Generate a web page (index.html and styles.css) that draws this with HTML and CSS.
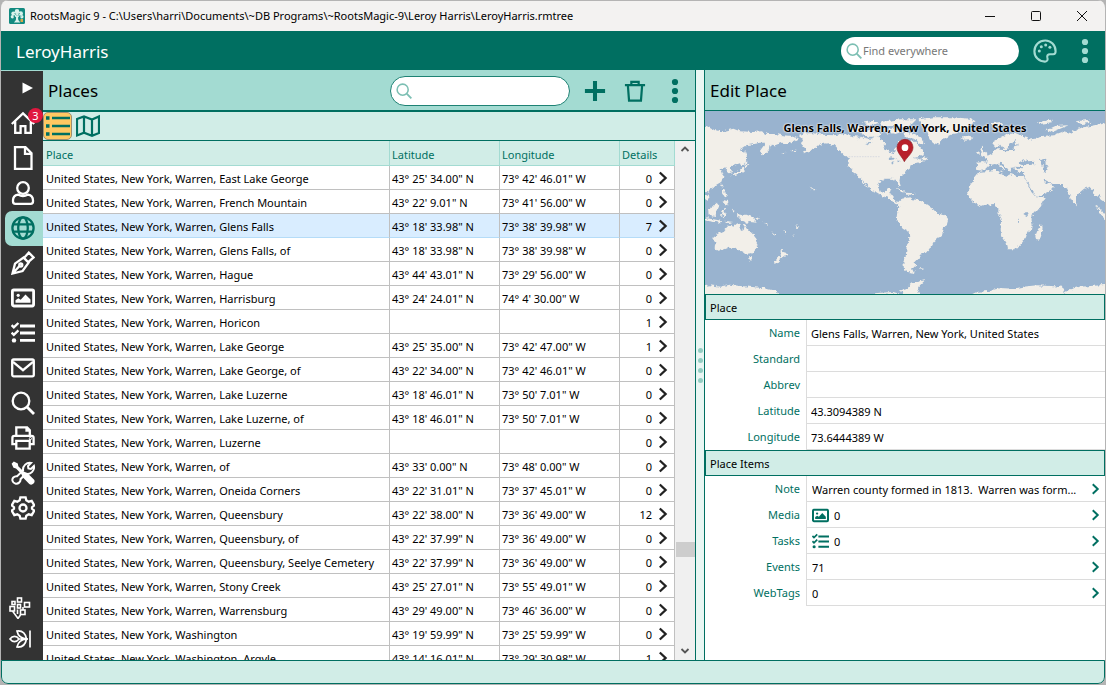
FILE: index.html
```html
<!DOCTYPE html>
<html lang="en">
<head>
<meta charset="utf-8">
<title>RootsMagic 9 - LeroyHarris</title>
<link rel="stylesheet" href="styles.css">
</head>
<body>
<svg class="sprite" aria-hidden="true">
  <symbol id="chev" viewBox="0 0 10 14"><path d="M1.8 1.5 7.6 7l-5.8 5.5" fill="none" stroke="currentColor" stroke-width="2.3"/></symbol>
  <symbol id="dots" viewBox="0 0 8 26"><circle cx="4" cy="4" r="3.1"/><circle cx="4" cy="13" r="3.1"/><circle cx="4" cy="22" r="3.1"/></symbol>
  <symbol id="lens" viewBox="0 0 24 24"><circle cx="10" cy="10" r="8.300" fill="none" stroke="currentColor" stroke-width="2.3"/><path d="m16 16 7 7" fill="none" stroke="currentColor" stroke-width="2.8"/></symbol>
  <symbol id="photo" viewBox="0 0 24 24"><rect x="1.4" y="4" width="21.2" height="16" rx="1.4" fill="none" stroke="currentColor" stroke-width="2.8"/><circle cx="7.200" cy="9.3" r="1.6" fill="currentColor"/><path d="M4.5 16.8v-2.6l2.8-2 2.4 1.6 4.8-5.4 5 5.2v3.2z" fill="currentColor"/></symbol>
  <symbol id="checks" viewBox="0 0 24 24"><path d="M9 5h15M9 12h15M9 19.4h15" fill="none" stroke="currentColor" stroke-width="2.8"/><path d="m.6 4.2 2.2 2.2L7.4 2M.6 11.6l2.2 2.2 4.6-4.4" fill="none" stroke="currentColor" stroke-width="2.4"/><circle cx="3" cy="19.4" r="2.2" fill="currentColor"/></symbol>
</svg>

<div class="window">
  <header class="titlebar">
    <svg class="app-icon" viewBox="0 0 16 16" aria-hidden="true"><rect width="16" height="16" rx="1.5" fill="#138a80"/><g fill="#d9f2ec"><circle cx="8" cy="3.4" r="2.3"/><circle cx="4.4" cy="5.5" r="2.1"/><circle cx="11.8" cy="5.4" r="2.2"/><circle cx="3.4" cy="8.8" r="1.7"/><circle cx="12.8" cy="8.8" r="1.7"/><circle cx="8" cy="7.2" r="2.2"/><path d="M7.2 7h1.8l.3 5 2 2.4H5l1.9-2.4z"/></g><path d="m5.5 5 2 2.5M10.8 5 8.8 8M4 8.6l3 1.6M12.4 8.4l-3 2" stroke="#138a80" stroke-width=".6"/><path d="M11.5 11h2.5v3h-2.500z" fill="#d9a94a"/></svg>
    <span class="caption">RootsMagic 9 - C:\Users\harri\Documents\~DB Programs\~RootsMagic-9\Leroy Harris\LeroyHarris.rmtree</span>
    <div class="win-buttons">
      <button type="button" aria-label="Minimize"><svg viewBox="0 0 12 12"><path d="M1 6.500h10"/></svg></button>
      <button type="button" aria-label="Maximize"><svg viewBox="0 0 12 12"><rect x="1.500" y="1.500" width="9" height="9" rx="1"/></svg></button>
      <button type="button" aria-label="Close"><svg viewBox="0 0 12 12"><path d="m1 1 10 10M11 1 1 11"/></svg></button>
    </div>
  </header>

  <div class="brandbar">
    <h1>LeroyHarris</h1>
    <div class="search search-top">
      <svg aria-hidden="true"><use href="#lens"/></svg>
      <input type="text" placeholder="Find everywhere" aria-label="Find everywhere">
    </div>
    <button type="button" class="palette" aria-label="Colors"><svg viewBox="0 0 24 24"><path d="M12.500 1.500C6.400 1.300 1.400 6.100 1.400 12.200c0 5.800 4.500 10.500 10.600 10.400 2.400-.1 3-1.900 2.400-3.800-.6-2.100.4-3.600 2.600-3.600h3.200c1.500 0 2.400-1.200 2.400-2.900C22.600 5.900 17.900 1.700 12.500 1.500z" fill="none" stroke="currentColor" stroke-width="2.100"/><g fill="currentColor"><circle cx="6.300" cy="12" r="1.500"/><circle cx="8.300" cy="7.700" r="1.500"/><circle cx="12.700" cy="6" r="1.500"/><circle cx="16.900" cy="8.200" r="1.500"/></g></svg></button>
    <button type="button" class="more" aria-label="More"><svg><use href="#dots"/></svg></button>
  </div>

  <div class="workspace">
    <nav class="rail" aria-label="Views">
      <button type="button" class="expand" aria-label="Expand"><svg viewBox="0 0 24 24"><path d="m7.500 6.500 10.500 5.500-10.500 5.500z" fill="currentColor"/></svg></button>
      <button type="button" aria-label="Home"><svg viewBox="0 0 24 24"><path d="M.8 13 12 2.300 23.200 13M4.200 10.500v11.300h5.400v-6.600h4.800v6.600h5.400V10.500"/></svg><span class="badge">3</span></button>
      <button type="button" aria-label="Publish"><svg viewBox="0 0 24 24"><path d="M4 1.200h10.500l6 6V22.800H4zM14 1.500v6.300h6.300"/></svg></button>
      <button type="button" aria-label="People"><svg viewBox="0 0 24 24"><circle cx="12" cy="7" r="5.800"/><path d="M7 13.600c-3 .6-5 2.900-5 5.700v1.300c0 1.200.9 2.200 2.200 2.200h15.600c1.300 0 2.200-1 2.200-2.200v-1.300c0-2.800-2-5.100-5-5.700-3 1.700-7 1.700-10 0z"/></svg></button>
      <button type="button" class="active" aria-label="Places" aria-current="page"><svg viewBox="0 0 24 24"><circle cx="12" cy="12" r="10.600"/><ellipse cx="12" cy="12" rx="4.800" ry="10.600"/><path d="M2.300 8.300h19.400M2.300 15.700h19.400"/></svg></button>
      <button type="button" aria-label="Sources"><svg viewBox="0 0 24 24"><path d="M1.500 22.500 4 12.600 12.600 6.600l5 5-6 8.400zM13 7 17.800 1.600 22.600 6.400 17.200 11.200M2 22l6.500-7"/><circle cx="9.800" cy="14" r="1.500"/></svg></button>
      <button type="button" aria-label="Media"><svg><use href="#photo"/></svg></button>
      <button type="button" aria-label="Tasks"><svg><use href="#checks"/></svg></button>
      <button type="button" aria-label="Addresses"><svg viewBox="0 0 24 24"><rect x="1.200" y="3.500" width="21.600" height="16.800" rx="1.500"/><path d="m2 5.800 10 8.400 10-8.400"/></svg></button>
      <button type="button" aria-label="Search"><svg><use href="#lens"/></svg></button>
      <button type="button" aria-label="Print"><svg viewBox="0 0 24 24"><path d="M5.300 10V1.400h10.800l2.700 2.800V10M5 18.200H1.400v-6.400c0-1.200.9-2 2-2h17.200c1.100 0 2 .8 2 2v6.400H19M5.300 14.800h13.400v7.800H5.300zM15.500 1.500v3.200h3"/><circle cx="19.300" cy="12.600" r=".4"/></svg></button>
      <button type="button" aria-label="Tools"><svg viewBox="0 0 24 24"><path d="M14.200 13.200 9.500 18.200c.4 2.700-2.300 5-5.200 4.300-2.900-.8-3.800-4-2-6 1-1 2.300-1.400 3.800-1.200l6-5.800c-.7-4.500 3.600-8.600 8-7.600L17 5l.4 2.500 2.500.5 3-3c.9 4.300-3 8.700-7.300 7.800" stroke-width="2"/><path d="m.6 2.800 2.200-2.200 4 2 .5 2.600 5.400 5.300 3.600 1.500 6.600 6.600c2.400 2.600-1.800 6.800-4.600 4.400l-6.600-6.700-1.500-3.500L5 7.400l-2.500-.6z" fill="currentColor" stroke="none"/></svg></button>
      <button type="button" aria-label="Settings"><svg viewBox="0 0 24 24"><path d="M9.400 1.300h5.200l.7 3 2.400 1.400 3-.9 2.600 4.500-2.300 1.900v1.600l2.300 1.900-2.600 4.500-3-.9-2.400 1.400-.7 3H9.400l-.7-3-2.400-1.400-3 .9-2.600-4.500L3 12.800v-1.600L.7 9.300l2.600-4.500 3 .9 2.400-1.400z"/><circle cx="12" cy="12" r="3.500"/></svg></button>
      <span class="rail-gap"></span>
      <button type="button" class="small" aria-label="FamilySearch"><svg viewBox="0 0 22 22"><g stroke-width="1.600"><rect x="8.500" y="1" width="4" height="4"/><rect x="3" y="4.500" width="3" height="3"/><rect x="1" y="9.500" width="4.500" height="4.500"/><rect x="8.500" y="7.500" width="3" height="3.500"/><rect x="15.500" y="5.500" width="5" height="4.500"/><rect x="11.500" y="13" width="4.500" height="4.500"/><path d="M3.500 14 9 21.500 11.500 18M8.500 17v-4.500M14 13v-3"/></g></svg></button>
      <button type="button" class="small" aria-label="Ancestry"><svg viewBox="0 0 22 22"><g stroke-width="1.700"><path d="M1 11c2.500-3.400 6.500-3.400 9 0-2.500 3.400-6.500 3.400-9 0zM19 11h-9M8 3c5-.5 8.500 2.500 9.500 8-5.500-.5-8.500-3-9.500-8zM8 19c5 .5 8.500-2.500 9.500-8-5.500.5-8.500 3-9.500 8zM21 2.500v17"/></g></svg></button>
    </nav>

    <main class="places">
      <div class="toolbar">
        <h2>Places</h2>
        <div class="search search-places"><svg aria-hidden="true"><use href="#lens"/></svg><input type="text" aria-label="Search places"></div>
        <button type="button" aria-label="Add"><svg viewBox="0 0 24 24"><path d="M12 1v22M1 12h22" stroke-width="4.400"/></svg></button>
        <button type="button" aria-label="Delete"><svg viewBox="0 0 24 24"><path d="M1 5.500h22M8 5.500V2h8v3.500M4.200 5.500l1.300 17h13l1.300-17" stroke-width="2.400"/></svg></button>
        <button type="button" class="more" aria-label="More"><svg><use href="#dots"/></svg></button>
      </div>
      <div class="viewbar">
        <button type="button" class="on" aria-label="List view"><svg viewBox="0 0 24 24"><path d="M6 4h18M6 12h18M6 20h18" stroke-width="2.600"/><path d="M0 4h3.500M0 12h3.500M0 20h3.500" stroke-width="3.600"/></svg></button>
        <button type="button" aria-label="Map view"><svg viewBox="0 0 24 24"><path d="m1 5 7-2.500 8 3 7-3V19l-7 2.800-8-3L1 21.500zM8 3v15.500M16 5.500V21.500" stroke-width="2.200"/></svg></button>
      </div>
      <div class="list">
        <div class="table-wrap">
          <table>
            <colgroup><col><col class="c-lat"><col class="c-lon"><col class="c-det"></colgroup>
            <thead><tr><th>Place</th><th>Latitude</th><th>Longitude</th><th>Details</th></tr></thead>
            <tbody>
              <tr><td>United States, New York, Warren, East Lake George</td><td>43° 25' 34.00" N</td><td>73° 42' 46.01" W</td><td>0<svg><use href="#chev"/></svg></td></tr>
              <tr><td>United States, New York, Warren, French Mountain</td><td>43° 22' 9.01" N</td><td>73° 41' 56.00" W</td><td>0<svg><use href="#chev"/></svg></td></tr>
              <tr class="selected"><td>United States, New York, Warren, Glens Falls</td><td>43° 18' 33.98" N</td><td>73° 38' 39.98" W</td><td>7<svg><use href="#chev"/></svg></td></tr>
              <tr><td>United States, New York, Warren, Glens Falls, of</td><td>43° 18' 33.98" N</td><td>73° 38' 39.98" W</td><td>0<svg><use href="#chev"/></svg></td></tr>
              <tr><td>United States, New York, Warren, Hague</td><td>43° 44' 43.01" N</td><td>73° 29' 56.00" W</td><td>0<svg><use href="#chev"/></svg></td></tr>
              <tr><td>United States, New York, Warren, Harrisburg</td><td>43° 24' 24.01" N</td><td>74° 4' 30.00" W</td><td>0<svg><use href="#chev"/></svg></td></tr>
              <tr><td>United States, New York, Warren, Horicon</td><td></td><td></td><td>1<svg><use href="#chev"/></svg></td></tr>
              <tr><td>United States, New York, Warren, Lake George</td><td>43° 25' 35.00" N</td><td>73° 42' 47.00" W</td><td>1<svg><use href="#chev"/></svg></td></tr>
              <tr><td>United States, New York, Warren, Lake George, of</td><td>43° 22' 34.00" N</td><td>73° 42' 46.01" W</td><td>0<svg><use href="#chev"/></svg></td></tr>
              <tr><td>United States, New York, Warren, Lake Luzerne</td><td>43° 18' 46.01" N</td><td>73° 50' 7.01" W</td><td>0<svg><use href="#chev"/></svg></td></tr>
              <tr><td>United States, New York, Warren, Lake Luzerne, of</td><td>43° 18' 46.01" N</td><td>73° 50' 7.01" W</td><td>0<svg><use href="#chev"/></svg></td></tr>
              <tr><td>United States, New York, Warren, Luzerne</td><td></td><td></td><td>0<svg><use href="#chev"/></svg></td></tr>
              <tr><td>United States, New York, Warren, of</td><td>43° 33' 0.00" N</td><td>73° 48' 0.00" W</td><td>0<svg><use href="#chev"/></svg></td></tr>
              <tr><td>United States, New York, Warren, Oneida Corners</td><td>43° 22' 31.01" N</td><td>73° 37' 45.01" W</td><td>0<svg><use href="#chev"/></svg></td></tr>
              <tr><td>United States, New York, Warren, Queensbury</td><td>43° 22' 38.00" N</td><td>73° 36' 49.00" W</td><td>12<svg><use href="#chev"/></svg></td></tr>
              <tr><td>United States, New York, Warren, Queensbury, of</td><td>43° 22' 37.99" N</td><td>73° 36' 49.00" W</td><td>0<svg><use href="#chev"/></svg></td></tr>
              <tr><td>United States, New York, Warren, Queensbury, Seelye Cemetery</td><td>43° 22' 37.99" N</td><td>73° 36' 49.00" W</td><td>0<svg><use href="#chev"/></svg></td></tr>
              <tr><td>United States, New York, Warren, Stony Creek</td><td>43° 25' 27.01" N</td><td>73° 55' 49.01" W</td><td>0<svg><use href="#chev"/></svg></td></tr>
              <tr><td>United States, New York, Warren, Warrensburg</td><td>43° 29' 49.00" N</td><td>73° 46' 36.00" W</td><td>0<svg><use href="#chev"/></svg></td></tr>
              <tr><td>United States, New York, Washington</td><td>43° 19' 59.99" N</td><td>73° 25' 59.99" W</td><td>0<svg><use href="#chev"/></svg></td></tr>
              <tr><td>United States, New York, Washington, Argyle</td><td>43° 14' 16.01" N</td><td>73° 29' 30.98" W</td><td>1<svg><use href="#chev"/></svg></td></tr>
            </tbody>
          </table>
        </div>
        <div class="scrollbar" aria-hidden="true">
          <svg viewBox="0 0 10 8"><path d="m1.500 6 3.500-3.500L8.500 6"/></svg>
          <div class="track"><span class="before"></span><span class="thumb"></span><span class="after"></span></div>
          <svg viewBox="0 0 10 8"><path d="m1.500 2 3.500 3.500L8.500 2"/></svg>
        </div>
      </div>
    </main>

    <div class="splitter" role="separator" aria-label="Resize"><i></i><i></i><i></i><i></i></div>

    <aside class="editor">
      <h2>Edit Place</h2>
      <div class="map">
        <svg viewBox="15 9 1200 549" preserveAspectRatio="xMidYMid slice" role="img" aria-label="World map">
          <defs><filter id="coast" x="0" y="0" width="100%" height="100%"><feTurbulence type="fractalNoise" baseFrequency=".09" numOctaves="3" seed="4"/><feDisplacementMap in="SourceGraphic" scale="14" xChannelSelector="R" yChannelSelector="G"/></filter></defs>
          <g fill="#f2efe9" filter="url(#coast)">
            <path fill="none" d="M-40-40h1320v700H-40z"/>
            <path d="M-10 60 20 54 40 66 70 70 100 62 120 70 160 72 185 70 200 78 225 78 250 82 275 84 297 92 285 100 262 106 245 104 225 112 212 110 210 124 200 134 184 142 180 128 192 112 196 104 180 104 160 108 138 112 120 124 140 142 138 160 128 172 118 166 108 172 96 174 90 182 96 192 84 196 76 178 62 184 70 206 62 226 44 236 30 242 24 254 10 248-10 250z"/>
            <path d="m132 124 8 20 2 22-6-2zM134 162l12 10-12 6zM132 176l2 16-16 6-22 4 8-8 16-6zM64 226l6 8-4 6zM66 244l10 8 4 14-6 2-8-12zM70 276l14 4 2 12-12-4zM10 256l14 8 2 16-10-6zM24 304l14-6 12-14 8 10-6 12-6 18-20-4zM64 306l18-4-10 8 8 14-6 4-6-8-4 8zM10 330l30 4 24 4-4 6-30-4-20-4zM70 338l30 4-20 4zM108 318l14 2 18 0 18 8 12 16-20-2-10 2-20-10zM166 330l14-4-8 10zM190 340l14 12-4 2zM214 372l12 10-2 4zM98 302l6 4-4 12z"/>
            <path d="M40 386 56 376 72 368 82 356 90 350 100 356 112 346 120 350 118 362 130 370 136 346 144 364 158 378 170 394 174 408 166 426 156 438 138 440 128 432 114 426 104 418 84 420 68 426 52 428 44 422 46 404zM144 448h14l-6 10zM242 424l8 8 12 4-10 12-8 2-2-10zM236 446l8 6-12 14-14 2zM326 236l10 4-2 4zM338 240l8 4-4 4zM252 364l8 10-4 2zM286 352l12 4-6 4zM276 380h8v4z"/>
            <path d="M294 82 310 76 340 76 372 80 400 82 430 78 455 84 480 86 510 92 532 84 548 98 556 112 550 124 566 130 582 136 588 120 598 100 614 92 624 110 638 96 654 112 668 128 672 138 656 146 642 150 662 154 672 160 650 164 632 174 620 184 612 198 600 210 598 220 602 234 596 234 590 218 576 212 556 212 540 222 534 236 540 250 554 254 562 240 574 240 568 258 582 266 582 278 594 282 606 286 600 292 580 286 564 270 548 264 528 252 512 246 496 226 480 208 470 198 458 190 446 176 446 154 434 142 420 128 404 112 384 106 364 108 350 116 330 128 310 136 318 122 310 116 302 104 308 94z"/>
            <path d="M670 144l14 6v8l-16-2zM588 240l20 6 14 8-18-2zM618 254l26 2-10 4-16 0zM476 202l10 12 12 22-6-4-16-22zM268 130l20-6-4 5zM240 138l16-4-2 4zM440 62l34-10 30 6-14 14-30 0zM480 74l40-10 26 10-10 12-30 0zM488 44l30-6 20 6-22 8zM540 42l60-8 50 0-14 14-24 10-30-4-30 0zM550 62l40 0 20 8-24 8-30-6zM610 72l24 2 26 14 12 16-14 4-14-14-30-8z"/>
            <path d="M656 34 700 28 760 28 810 32 824 40 806 50 806 62 788 72 760 78 740 88 724 96 714 108 700 106 690 96 682 80 678 64 664 52zM784 90l14-8 22 4-4 10-22 2z"/>
            <path d="M594 282 606 272 628 268 636 274 658 276 672 284 686 294 702 306 716 318 736 322 744 332 742 346 732 360 726 382 710 394 698 404 690 420 678 434 660 440 656 452 644 464 646 474 636 482 642 494 622 492 612 484 610 462 618 440 620 414 628 390 626 372 608 362 598 346 590 328 592 312 598 298zM634 496l10-6-2 8zM660 480l12 2-10 4z"/>
            <path d="M838 192 858 190 880 186 896 186 900 198 920 204 932 198 950 204 970 204 976 216 986 234 994 252 1008 268 1034 268 1030 282 1014 302 1000 318 994 334 998 350 996 362 982 374 978 388 968 402 956 416 940 424 924 424 920 406 908 386 902 366 906 344 902 324 892 312 892 296 880 288 860 290 840 294 822 282 806 266 804 246 812 226 822 212zM1022 352l6 4-2 20-8 22-10-2-2-12 8-20z"/>
            <path d="M832 186 830 164 850 162 858 164 860 152 846 144 866 142 880 134 892 124 900 118 898 128 920 130 940 126 944 114 960 110 944 108 948 96 936 100 928 112 922 122 912 124 904 110 886 116 876 104 896 92 918 80 944 74 962 82 984 88 980 96 1004 92 1020 84 1060 82 1092 70 1110 76 1134 62 1160 56 1190 50 1230 44V280L1206 278 1196 262 1186 264 1178 246 1168 236 1152 242 1138 254 1128 268 1128 284 1120 286 1108 262 1102 242 1094 236 1086 228 1058 228 1036 216 1028 212 1038 226 1054 228 1062 236 1050 250 1026 262 1008 266 996 246 984 226 974 208 976 192 960 192 946 188 944 178 930 180 934 192 926 188 916 174 904 164 898 166 916 182 910 184 896 170 884 168 870 172 858 184 846 188zM838 124l10-10 2 12 12 12-2 6-18 2 4-10zM828 134l8-4v10h-8zM900 188h10v5zM1126 280l6 8-6 4zM1186 290l14 12 24 30-8 4-20-26zM1036 68l30-14 40-2-20 8-34 14zM872 46l30-4 8 8-26 6zM1010 42l40-6 10 6-40 6zM1126 40l40-4 8 8-30 4z"/>
            <path d="M-10 536 30 532 60 536 90 530 120 534 150 536 190 540 230 550 240 570H-10zM600 570 610 552 596 548 620 540 632 528 676 516 660 532 652 546 664 570zM520 556l60-4 20 6-60 4zM790 570 830 552 870 548 900 540 940 542 970 536 1010 532 1050 534 1084 536 1096 546 1090 556 1110 544 1140 536 1230 530V580H790z"/>
          </g>
          <g fill="#99b3cf" filter="url(#coast)"><path fill="none" d="M-40-40h1320v700H-40z"/><path d="M956 162l14-8 14 6 20-2 2 10-24 4-20-2zM1020 156l14-4 6 8-4 8 8 14-8 10-8-8 0-12zM946 176l28 2-20 8zM970 318l8-6 8 4-6 8zM954 330l4 14-4 0zM560 150l18-2 8 6-16 2zM574 158l10 4-8 8zM592 154l12 8-10 2zM494 108l18-4-6 8zM470 88l12 0-6 6z"/></g>
          <path d="M446 146h96" stroke="#cdd0dc" stroke-width="2" stroke-dasharray="5 3"/>
          <path d="M612 162c-6-14-22-26-22-43a24 24 0 0 1 48 0c0 17-18 29-26 43z" transform="translate(1 -1)" fill="#b81f2b" stroke="#8f1c24" stroke-width="2"/><circle cx="615" cy="119" r="10" fill="#fff"/>
        </svg>
        <p>Glens Falls, Warren, New York, United States</p>
      </div>
      <section>
        <h3>Place</h3>
        <div class="field"><label for="name">Name</label><input id="name" value="Glens Falls, Warren, New York, United States"></div>
        <div class="field"><label for="standard">Standard</label><input id="standard"></div>
        <div class="field"><label for="abbrev">Abbrev</label><input id="abbrev"></div>
        <div class="field"><label for="lat">Latitude</label><input id="lat" value="43.3094389 N"></div>
        <div class="field"><label for="lon">Longitude</label><input id="lon" value="73.6444389 W"></div>
      </section>
      <section>
        <h3>Place Items</h3>
        <div class="field"><label for="note">Note</label><button type="button" id="note"><span>Warren county formed in 1813.&nbsp; Warren was form...</span><svg class="go"><use href="#chev"/></svg></button></div>
        <div class="field"><label for="media">Media</label><button type="button" id="media"><svg class="kind"><use href="#photo"/></svg><span>0</span><svg class="go"><use href="#chev"/></svg></button></div>
        <div class="field"><label for="tasks">Tasks</label><button type="button" id="tasks"><svg class="kind"><use href="#checks"/></svg><span>0</span><svg class="go"><use href="#chev"/></svg></button></div>
        <div class="field"><label for="events">Events</label><button type="button" id="events"><span>71</span><svg class="go"><use href="#chev"/></svg></button></div>
        <div class="field"><label for="webtags">WebTags</label><button type="button" id="webtags"><span>0</span><svg class="go"><use href="#chev"/></svg></button></div>
      </section>
    </aside>
  </div>

  <footer class="statusbar"></footer>
</div>
</body>
</html>
```
FILE: styles.css
```css
:root {
  --green: #006f61;
  --mint: #a3dbd2;
  --pale: #d1ede7;
  --line: #c0c0c0;
  --dark: #333333;
}

* { box-sizing: border-box; }

body {
  margin: 0;
  background: #b4b4b4;
  color: #000;
  font: 11px/16px "Noto Sans", "Open Sans", sans-serif;
}

h1, h2, h3, p { margin: 0; font-weight: 400; }

button {
  display: flex;
  align-items: center;
  justify-content: center;
  padding: 0;
  border: 0;
  background: none;
  color: inherit;
  font: inherit;
}

input {
  min-width: 0;
  padding: 0;
  border: 0;
  outline: 0;
  background: none;
  color: inherit;
  font: inherit;
}

.sprite { display: none; }

.window {
  display: flex;
  flex-direction: column;
  height: 100vh;
  border: solid #b4b4b4;
  border-width: 0 1px 1px;
  border-radius: 8px;
  overflow: hidden;
}

.titlebar {
  display: flex;
  align-items: center;
  flex: 0 0 31px;
  padding-left: 8px;
  border-top: 1px solid #b4b4b4;
  background: #f3f2f1;
}
.app-icon { width: 16px; height: 16px; margin-right: 5px; }
.caption { flex: 1; white-space: nowrap; }
.win-buttons { display: flex; }
.win-buttons button { width: 46px; height: 30px; }
.win-buttons svg { width: 12px; height: 12px; fill: none; stroke: #111; }

.brandbar {
  display: flex;
  align-items: center;
  flex: 0 0 39px;
  padding-left: 15px;
  background: var(--green);
  color: #fff;
}
.brandbar h1 { flex: 1; padding-top: 2px; font-size: 17px; line-height: 24px; }

.search {
  display: flex;
  align-items: center;
  gap: 1px;
  padding: 0 12px 0 5px;
  border-radius: 15px;
  background: #fff;
}
.search svg { flex: none; width: 16px; height: 16px; color: #7cbfb3; }
.search input { flex: 1; padding-top: 1px; color: #000; }
.search input::placeholder { color: #777; opacity: 1; }
.search-top { width: 178px; height: 28px; }
.search-places { width: 180px; height: 30px; margin-right: 5px; border: 1px solid #1d8274; }

.palette, .brandbar .more { color: var(--mint); }
.palette { width: 52px; }
.palette svg { width: 24px; height: 24px; }
.more svg { width: 8px; height: 26px; fill: currentColor; }
.brandbar .more { width: 28px; margin-right: 6px; }

.workspace {
  display: grid;
  grid-template-columns: 42px minmax(0, 653fr) 8px minmax(0, 401fr);
  grid-template-rows: minmax(0, 1fr);
  flex: 1;
  min-height: 0;
}

.rail {
  display: flex;
  flex-direction: column;
  border-top: 1px solid var(--mint);
  padding-bottom: 5px;
  background: var(--dark);
  color: #fff;
}
.rail button {
  position: relative;
  flex: 0 0 35px;
  margin-left: 4px;
  padding: 0 2px 1px 0;
}
.rail svg { width: 24px; height: 24px; fill: none; stroke: currentColor; stroke-width: 2.3px; }
.rail .expand { padding-left: 6px; padding-right: 0; }
.rail .expand svg, .rail use { stroke: none; }
.rail .active { border-radius: 7px 0 0 7px; background: var(--mint); color: var(--green); }
.rail .small { flex-basis: 31px; padding-right: 8px; }
.rail .small svg { width: 22px; height: 22px; }
.rail-gap { flex: 1; }
.badge {
  position: absolute;
  top: 2px;
  right: 0;
  width: 15px;
  height: 15px;
  border-radius: 50%;
  background: #e0173f;
  line-height: 15px;
  text-align: center;
}

.places {
  display: flex;
  flex-direction: column;
  border-right: 1px solid var(--green);
  background: #fff;
}
h2 { font-size: 17px; line-height: 24px; }
.toolbar {
  display: flex;
  align-items: center;
  flex: 0 0 42px;
  padding: 2px 0 0 5px;
  border-bottom: 2px solid var(--green);
  background: var(--mint);
  color: var(--green);
}
.toolbar h2 { flex: 1; color: #000; }
.toolbar button { width: 40px; height: 32px; }
.toolbar button:not(.more) svg { width: 22px; height: 22px; fill: none; stroke: currentColor; }

.viewbar {
  display: flex;
  flex: 0 0 29px;
  gap: 1px;
  border-bottom: 1px solid var(--green);
  background: var(--pale);
  color: var(--green);
}
.viewbar button { width: 29px; height: 28px; border-radius: 5px; }
.viewbar .on { border: 1px solid #9b8f72; background: #ffc862; }
.viewbar svg { width: 24px; height: 24px; fill: none; stroke: currentColor; }

.list { display: flex; flex: 1; min-height: 0; }
.table-wrap { flex: 1; min-width: 0; overflow: hidden; }
table { width: 100%; border-collapse: separate; border-spacing: 0; table-layout: fixed; }
.c-lat { width: 110px; }
.c-lon { width: 120px; }
.c-det { width: 55px; }
th, td {
  height: 24px;
  padding: 2px 2px 0;
  border: solid var(--line);
  border-width: 0 1px 1px 0;
  font-weight: 400;
  text-align: left;
  white-space: nowrap;
  overflow: hidden;
}
th:first-child, td:first-child { padding-left: 3px; }
th { height: 25px; padding-top: 3px; border-color: var(--mint); background: var(--pale); color: #007062; }
td:last-child { padding-right: 6px; text-align: right; }
td svg { width: 10px; height: 14px; margin-left: 6px; vertical-align: -2px; color: #222; }
.selected td { border-bottom-color: #b5dcf8; background: #d9edff; }

.scrollbar {
  display: flex;
  flex-direction: column;
  align-items: center;
  flex: 0 0 20px;
  padding: 4px 0 5px;
  background: #f0f0f0;
}
.scrollbar svg { width: 10px; height: 8px; fill: none; stroke: #555; stroke-width: 1.8px; }
.track { display: flex; flex: 1; flex-direction: column; width: 100%; }
.before { flex: 389; }
.thumb { flex: 15; background: #cdcdcd; margin-left: 1px; }
.after { flex: 90; }

.splitter {
  display: flex;
  flex-direction: column;
  align-items: center;
  justify-content: center;
  gap: 5px;
  background: #e9f6f3;
}
.splitter i { width: 5px; height: 5px; border-radius: 50%; background: #93cdc2; }

.editor {
  border-left: 1px solid var(--green);
  background: #fff;
  overflow: hidden;
}
.editor h2 { height: 41px; padding: 9px 5px 0; border-bottom: 1px solid var(--green); background: var(--mint); }
.map { position: relative; aspect-ratio: 400 / 183; background: #99b3cf; }
.map svg { display: block; width: 100%; height: 100%; }
.map p {
  position: absolute;
  top: 9px;
  left: 0;
  width: 100%;
  font-weight: 700;
  text-align: center;
  text-shadow: 0 0 2px #fff, 0 0 2px #fff;
}

h3 {
  height: 26px;
  padding: 1px 0 0 4px;
  border: 1px solid var(--green);
  background: var(--pale);
  font-size: 11px;
  line-height: 24px;
}
.field { display: grid; grid-template-columns: 95px minmax(0, 1fr); column-gap: 6px; height: 26px; }
.field label { color: #007062; line-height: 26px; text-align: right; }
.field input, .field button { border: solid #dcdcdc; border-width: 0 0 1px 1px; }
.field input { padding: 2px 0 0 4px; }
.field button { padding: 1px 5px 0 5px; text-align: left; }
.field span { flex: 1; padding-top: 1px; white-space: nowrap; overflow: hidden; }
.kind { width: 17px; height: 17px; margin-right: 5px; color: var(--green); }
.go { width: 9px; height: 12px; color: var(--green); }

.statusbar {
  flex: 0 0 24px;
  border: 1px solid var(--green);
  border-radius: 0 0 7px 7px;
  background: var(--pale);
}
```
